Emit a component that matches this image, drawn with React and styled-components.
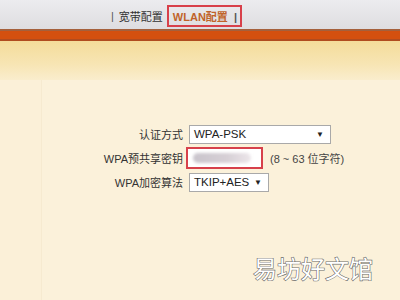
import styled, { createGlobalStyle } from "styled-components";

const Global = createGlobalStyle`
  html, body { margin: 0; padding: 0; }
  body {
    width: 400px;
    height: 300px;
    overflow: hidden;
    font-family: "Liberation Sans", "Noto Sans CJK SC", sans-serif;
    background: #fbf1da;
  }
`;

const Page = styled.div`
  width: 400px;
  height: 300px;
  display: flex;
  flex-direction: column;
`;

const TopBar = styled.div`
  height: 29px;
  background: linear-gradient(#ececef, #dedde0);
  display: flex;
  align-items: center;
  padding-left: 108px;
  font-size: 11px;
  color: #333;
  box-sizing: border-box;
  padding-top: 2px;
`;

const Sep = styled.span`
  color: #555;
  margin: 0 3px;
`;

const NavItem = styled.span`
  padding: 2px 2px;
  ${(p) =>
    p.active &&
    `
    color: #c0632a;
    font-weight: bold;
    border: 2px solid #d8404a;
    padding: 1px 0 1px 4px;
    margin-left: 2px;
  `}
`;

const Stripe = styled.div`
  height: 12px;
  background: #d4500f;
  border-top: 2px solid #a5603c;
  border-bottom: 2px solid #b04c1f;
  box-sizing: border-box;
`;

const Band = styled.div`
  height: 39px;
  background: linear-gradient(#f4dc9a, #f7e5b4 60%, #faedcd);
`;

const Body = styled.div`
  flex: 1;
  display: flex;
`;

const Side = styled.div`
  width: 41px;
  background: #fbf0d8;
  border-right: 1px solid #f6ead0;
`;

const Main = styled.div`
  flex: 1;
  position: relative;
  padding: 42px 0 0 51px;
`;

const Form = styled.div`
  display: grid;
  grid-template-columns: 90px auto;
  grid-auto-rows: 24px;
  align-items: center;
  column-gap: 6px;
  font-size: 11px;
  color: #333;
`;

const Label = styled.div`
  text-align: right;
`;

const Field = styled.div`
  display: flex;
  align-items: center;
  gap: 7px;
`;

const Select = styled.div`
  width: ${(p) => p.w}px;
  height: 19px;
  box-sizing: border-box;
  background: #fff;
  border: 1px solid #a9a9a9;
  display: flex;
  align-items: center;
  justify-content: space-between;
  padding: 0 6px 0 4px;
  font-size: 11.5px;
  color: #222;
`;

const Arrow = styled.span`
  font-size: 8px;
`;

const Secret = styled.div`
  width: 77px;
  height: 22px;
  box-sizing: border-box;
  border: 2px solid #d7414b;
  background: #fff;
  margin-left: -3px;
  display: flex;
  align-items: center;
  padding-left: 5px;
`;

const Blur = styled.div`
  width: 58px;
  height: 10px;
  border-radius: 5px;
  background: linear-gradient(90deg, #c9c4cc, #d7d0d6 60%, #ece6ea);
  filter: blur(1.5px);
`;

const Hint = styled.span`
  color: #444;
`;

const Watermark = styled.div`
  position: absolute;
  right: 27px;
  bottom: 15px;
  font-family: "Noto Sans CJK SC", sans-serif;
  font-size: 24px;
  color: #fff;
  -webkit-text-stroke: 1.2px #6a6a6a;
  paint-order: stroke fill;
`;

export default function App() {
  return (
    <Page>
      <Global />
      <TopBar>
        <Sep>|</Sep>
        <NavItem>宽带配置</NavItem>
        <NavItem active>
          WLAN配置 <Sep>|</Sep>
        </NavItem>
      </TopBar>
      <Stripe />
      <Band />
      <Body>
        <Side />
        <Main>
          <Form>
            <Label>认证方式</Label>
            <Field>
              <Select w={142}>
                WPA-PSK <Arrow>▼</Arrow>
              </Select>
            </Field>
            <Label>WPA预共享密钥</Label>
            <Field>
              <Secret>
                <Blur />
              </Secret>
              <Hint>(8 ~ 63 位字符)</Hint>
            </Field>
            <Label>WPA加密算法</Label>
            <Field>
              <Select w={80}>
                TKIP+AES <Arrow>▼</Arrow>
              </Select>
            </Field>
          </Form>
          <Watermark>易坊好文馆</Watermark>
        </Main>
      </Body>
    </Page>
  );
}
